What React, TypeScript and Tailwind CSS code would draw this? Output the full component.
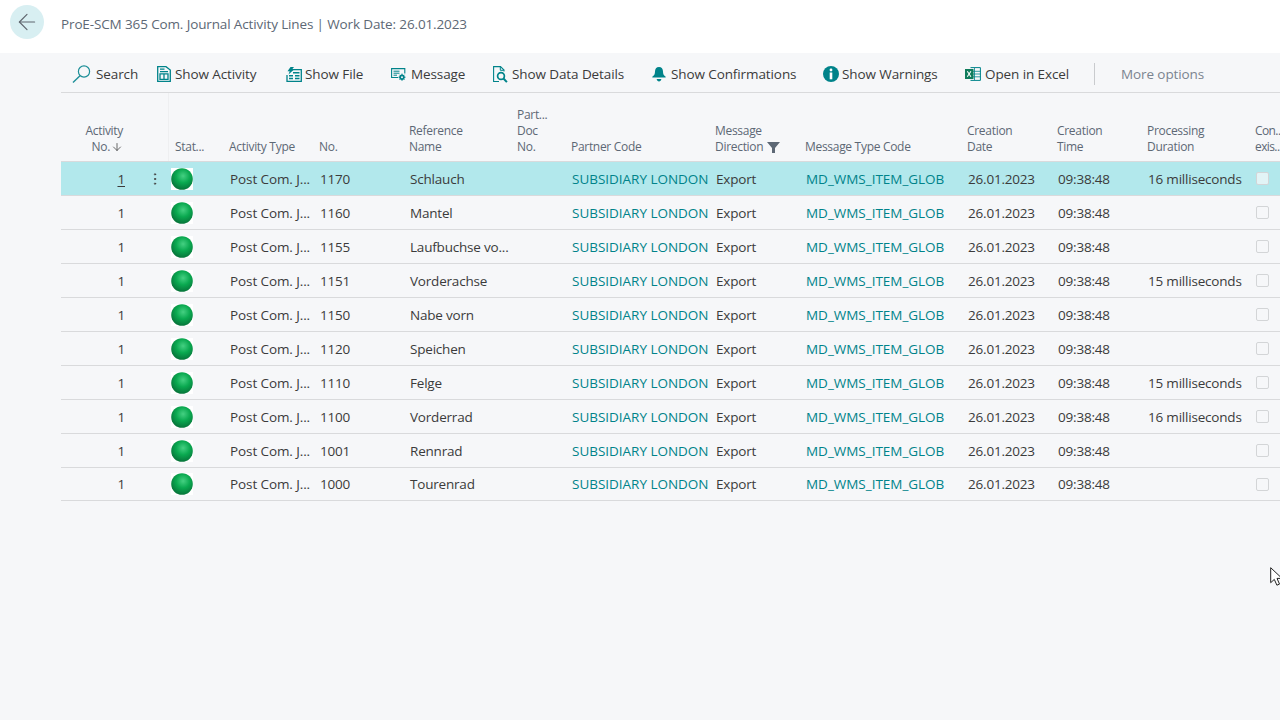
import type { ReactNode } from "react";
import { ArrowDown, ArrowLeft, MoreVertical } from "lucide-react";

const font = "font-['Open_Sans','Noto_Sans',sans-serif]";
const cols = "grid grid-cols-[78px_30px_60px_90px_90px_108px_54px_144px_90px_162px_90px_90px_108px_1fr]";

type Line = { no: string; name: string; duration?: string };

const lines: Line[] = [
  { no: "1170", name: "Schlauch", duration: "16 milliseconds" },
  { no: "1160", name: "Mantel" },
  { no: "1155", name: "Laufbuchse vo..." },
  { no: "1151", name: "Vorderachse", duration: "15 milliseconds" },
  { no: "1150", name: "Nabe vorn" },
  { no: "1120", name: "Speichen" },
  { no: "1110", name: "Felge", duration: "15 milliseconds" },
  { no: "1100", name: "Vorderrad", duration: "16 milliseconds" },
  { no: "1001", name: "Rennrad" },
  { no: "1000", name: "Tourenrad" },
];

function SearchIcon() {
  return (
    <svg width="19" height="18" viewBox="0 0 19 18" fill="none" stroke="#1d8f98" strokeWidth="1.2">
      <circle cx="12" cy="6.500" r="5.600" />
      <path d="M8 10.800 1 17.400" strokeWidth="1.400" />
    </svg>
  );
}

function ActivityIcon() {
  return (
    <svg width="14" height="16" viewBox="0 0 14 16" fill="none" stroke="#00838a" strokeWidth="1.300">
      <path d="M.7.7h8.300l4.300 3.300v11.300H.7z" />
      <path d="M3 3.200h4.500M3 5.600h8M3 7.800h8v5.600H3zM7 7.800v5.600" />
    </svg>
  );
}

function FileIcon() {
  return (
    <svg width="16" height="15" viewBox="0 0 16 15" fill="none">
      <path d="M5 2.700h10.300v11.600H1V8" stroke="#00838a" strokeWidth="1.300" />
      <path d="M4.500 0h3.500L6 2.400h2L2.500 7.500l1.200-3.300H1.500z" fill="#00838a" />
      <path d="M7 5.800h6.500M3 8.700h4M9 8.700h4.500M3 11.500h4M9 11.500h4.500" stroke="#00838a" strokeWidth="1.400" />
    </svg>
  );
}

function MessageIcon() {
  return (
    <svg width="15" height="13" viewBox="0 0 15 13" fill="none">
      <path d="M7 9.500H.6V.6h13.200v5" stroke="#00838a" strokeWidth="1.100" />
      <path d="M2.500 3.200h6M2.500 5.200h6M2.500 7.200h3.500" stroke="#00838a" />
      <circle cx="11" cy="9.200" r="2.700" fill="#00838a" />
      <path d="M11 5.600v7.200M7.500 9.200h7M8.600 6.800l4.800 4.800M13.400 6.800l-4.800 4.800" stroke="#00838a" />
      <circle cx="11" cy="9.200" r="1" fill="#f6f7f9" />
    </svg>
  );
}

function DataDetailsIcon() {
  return (
    <svg width="15" height="17" viewBox="0 0 15 17" fill="none" stroke="#00838a">
      <path d="M6 15.500H.6V.6h6.900l3.500 3.500v1.400" strokeWidth="1.100" />
      <path d="M7.300.8v3.500h3.500" />
      <circle cx="8" cy="10" r="3.400" strokeWidth="1.700" />
      <path d="M10.500 12.500l3.400 3.600" strokeWidth="2" />
    </svg>
  );
}

function BellIcon() {
  return (
    <svg width="14" height="15" viewBox="0 0 14 15" fill="#00838a">
      <path d="M7 0c2.700 0 4 2 4 4.400 0 2.400.6 3.800 2.400 5 .6.400.4 1.200-.4 1.200H1c-.8 0-1-.8-.4-1.200 1.800-1.200 2.400-2.600 2.400-5C3 2 4.300 0 7 0z" />
      <path d="M4.600 12h4.800c-.3 1.500-1.200 2.400-2.400 2.400S4.900 13.500 4.600 12z" />
    </svg>
  );
}

function InfoIcon() {
  return (
    <svg width="16" height="16" viewBox="0 0 16 16">
      <circle cx="8" cy="8" r="8" fill="#00838a" />
      <circle cx="8" cy="4" r="1.400" fill="#fff" />
      <rect x="6.700" y="6.500" width="2.600" height="6.800" fill="#fff" />
    </svg>
  );
}

function ExcelIcon() {
  return (
    <svg width="16" height="14" viewBox="0 0 16 14" fill="none">
      <path d="M5.500.6h9.900v12.800H5.500" stroke="#00838a" />
      <path d="M9.500 1v12M5.500 4.300h10M5.500 7h10M5.500 9.800h10" stroke="#00838a" strokeWidth=".8" />
      <rect x="0" y="2" width="8.500" height="10" fill="#107c5c" />
      <path d="M2.300 4.300l3.600 5.400M5.900 4.300L2.300 9.700" stroke="#fff" strokeWidth="1.100" />
    </svg>
  );
}

function Ball() {
  return (
    <span className="flex size-[22px] items-center justify-center bg-white">
      <svg width="22" height="22" viewBox="0 0 22 22">
        <defs>
          <radialGradient id="ball" cx="55%" cy="36%" r="64%">
            <stop offset="0%" stopColor="#45d082" />
            <stop offset="50%" stopColor="#0aa950" />
            <stop offset="100%" stopColor="#07743a" />
          </radialGradient>
        </defs>
        <circle cx="11" cy="11" r="10.800" fill="url(#ball)" />
      </svg>
    </span>
  );
}

function Action({ icon, label, width, gap }: { icon: ReactNode; label: string; width: string; gap: string }) {
  return (
    <div className={`flex items-center ${width} ${gap}`}>
      <span className="flex shrink-0 items-center">{icon}</span>
      <span className="whitespace-nowrap text-[13.500px] tracking-[-0.1px] text-[#3b3b3b]">{label}</span>
    </div>
  );
}

function Head({ children, className = "" }: { children: ReactNode; className?: string }) {
  return (
    <div className={`flex flex-col justify-end pb-[6px] text-[12px] leading-4 tracking-[-0.3px] text-[#5d6875] ${className}`}>
      {children}
    </div>
  );
}

function Row({ line, selected, last }: { line: Line; selected: boolean; last: boolean }) {
  const nudge = last ? "" : "mb-[2px]";
  return (
    <div
      className={`${cols} items-center border-b border-[#d9dadc] text-[13.500px] tracking-[-0.2px] text-[#3b3b3b] ${
        last ? "h-[33px]" : "h-[34px] pt-[2px]"
      } ${selected ? "bg-[#b2e8ec]" : ""}`}
    >
      <span className={`pr-[14px] text-right ${selected ? "underline underline-offset-2" : ""}`}>1</span>
      <span className={`flex justify-center pl-[2px] ${nudge}`}>
        {selected && <MoreVertical size={16} strokeWidth={1.500} className="text-[#444]" />}
      </span>
      <span className={`pl-[2px] ${nudge}`}>
        <Ball />
      </span>
      <span className="pl-[1px] whitespace-nowrap tracking-[-0.1px]">Post Com. J...</span>
      <span className="pl-[1px]">{line.no}</span>
      <span className="pl-[1px] whitespace-nowrap">{line.name}</span>
      <span />
      <span className="pl-[1px] whitespace-nowrap tracking-[-0.02px] text-[#00838a]">SUBSIDIARY LONDON</span>
      <span className="pl-[1px]">Export</span>
      <span className="pl-[1px] whitespace-nowrap tracking-[-0.02px] text-[#00838a]">MD_WMS_ITEM_GLOB</span>
      <span className="pl-[1px]">26.01.2023</span>
      <span className="pl-[1px]">09:38:48</span>
      <span className="pl-[1px] whitespace-nowrap">{line.duration}</span>
      <span className={`pl-[1px] ${nudge}`}>
        <span
          className={`block size-[13px] rounded-[2px] border border-[#d3d5d7] ${
            selected ? "bg-[#e2f4f6]" : "bg-[#f6f7f9]"
          }`}
        />
      </span>
    </div>
  );
}

export default function App() {
  return (
    <div className={`relative h-[720px] w-[1280px] overflow-hidden bg-[#f6f7f9] ${font}`}>
      <header className="flex h-[53px] items-center bg-white pb-[5px] pl-[10px]">
        <button type="button" className="-mt-[4px] flex size-[34px] items-center justify-center rounded-full bg-[#d8eff2]">
          <ArrowLeft size={26} strokeWidth={1.100} className="text-[#5f666e]" />
        </button>
        <h1 className="ml-[17px] text-[13.500px] font-normal tracking-[-0.13px] text-[#5d6875]">
          ProE-SCM 365 Com. Journal Activity Lines | Work Date: 26.01.2023
        </h1>
      </header>

      <div className="ml-[61px]">
        <div className="flex h-[40px] items-center border-b border-[#d9dadc] pl-[11px] pt-[3px]">
          <Action icon={<SearchIcon />} label="Search" width="w-[85px]" gap="gap-[5px]" />
          <Action icon={<ActivityIcon />} label="Show Activity" width="w-[129px]" gap="gap-[4px]" />
          <Action icon={<FileIcon />} label="Show File" width="w-[105px]" gap="gap-[3px]" />
          <Action icon={<MessageIcon />} label="Message" width="w-[102px]" gap="gap-[5px]" />
          <Action icon={<DataDetailsIcon />} label="Show Data Details" width="w-[159px]" gap="gap-[4px]" />
          <Action icon={<BellIcon />} label="Show Confirmations" width="w-[171px]" gap="gap-[5px]" />
          <Action icon={<InfoIcon />} label="Show Warnings" width="w-[142px]" gap="gap-[3px]" />
          <Action icon={<ExcelIcon />} label="Open in Excel" width="w-[129px]" gap="gap-[4px]" />
          <span className="h-[22px] w-px bg-[#c9cbce]" />
          <span className="ml-[26px] text-[13.500px] tracking-[-0.1px] text-[#7b8490]">More options</span>
        </div>

        <div className={`${cols} h-[69px] border-b border-[#d9dadc]`}>
          <Head className="items-end pr-[16px] text-right">
            <span>Activity</span>
            <span className="flex items-center">
              No.
              <ArrowDown size={12} strokeWidth={1.500} className="ml-[1px] text-[#3b3b3b]" />
            </span>
          </Head>
          <div className="border-r border-[#eeeff1]" />
          <Head className="pl-[6px]">Stat...</Head>
          <Head>Activity Type</Head>
          <Head>No.</Head>
          <Head>
            <span>Reference</span>
            <span>Name</span>
          </Head>
          <Head>
            <span>Part...</span>
            <span>Doc</span>
            <span>No.</span>
          </Head>
          <Head>Partner Code</Head>
          <Head>
            <span>Message</span>
            <span className="flex items-center whitespace-nowrap">
              Direction
              <svg width="13" height="11" viewBox="0 0 13 11" className="ml-[4px]" fill="#5d6875">
                <path d="M0 0h13L8 6v5H5V6z" />
              </svg>
            </span>
          </Head>
          <Head>Message Type Code</Head>
          <Head>
            <span>Creation</span>
            <span>Date</span>
          </Head>
          <Head>
            <span>Creation</span>
            <span>Time</span>
          </Head>
          <Head>
            <span>Processing</span>
            <span>Duration</span>
          </Head>
          <Head className="whitespace-nowrap tracking-[-0.6px]">
            <span>Con..</span>
            <span>exis..</span>
          </Head>
        </div>

        {lines.map((line, i) => (
          <Row key={line.no} line={line} selected={i === 0} last={i === lines.length - 1} />
        ))}
      </div>

      {/* mouse pointer caught in the shot */}
      <svg width="12" height="19" viewBox="0 0 12 19" className="absolute left-[1270px] top-[567px]" fill="#fff" stroke="#222">
        <path d="M.7.7v15l3.600-3.300 2.600 5.800 2.600-1.100-2.500-5.700h5z" />
      </svg>
    </div>
  );
}
